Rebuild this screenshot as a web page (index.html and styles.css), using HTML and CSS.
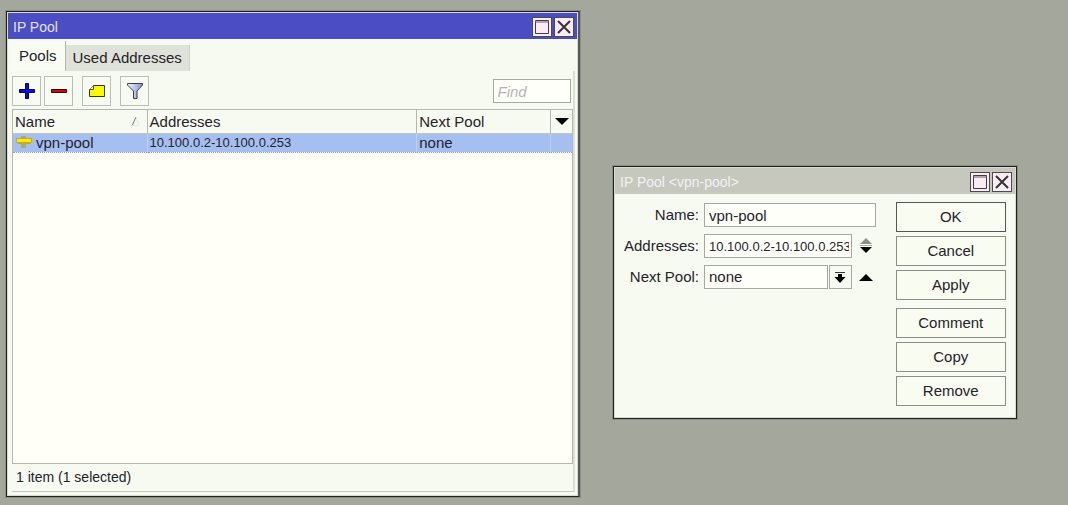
FILE: index.html
```html
<!DOCTYPE html>
<html lang="en">
<head>
<meta charset="utf-8">
<title>IP Pool</title>
<link rel="stylesheet" href="styles.css">
</head>
<body>
<main class="desktop">
  <section class="window window-list" aria-label="IP Pool">
    <header class="titlebar active">
      <h1 class="title">IP Pool</h1>
      <button class="win-btn" aria-label="Maximize"><svg width="18" height="18" viewBox="0 0 18 18"><path d="M2.500 2.500h13v13h-13z" fill="none" stroke="#443a42"/><path d="M2 4h14" stroke="#6b5f68"/></svg></button>
      <button class="win-btn" aria-label="Close"><svg width="18" height="18" viewBox="0 0 18 18"><path d="M3 3l12 12M15 3L3 15" stroke="#3a3038" stroke-width="2"/></svg></button>
    </header>
    <nav class="tabs" role="tablist">
      <button class="tab selected" role="tab" aria-selected="true">Pools</button>
      <button class="tab" role="tab" aria-selected="false">Used Addresses</button>
    </nav>
    <div class="panel">
      <div class="toolbar">
        <button class="tool" aria-label="Add"><svg width="18" height="18" viewBox="0 0 18 18"><path d="M7.500 1.500h3v6h6v3h-6v6h-3v-6h-6v-3h6z" fill="#0a0af0" stroke="#050530"/></svg></button>
        <button class="tool" aria-label="Remove"><svg width="18" height="18" viewBox="0 0 18 18"><path d="M1.500 7.500h15v3h-15z" fill="#d00808" stroke="#300808"/></svg></button>
        <button class="tool spaced" aria-label="Comment"><svg width="18" height="18" viewBox="0 0 18 18"><path d="M5.500 3.500h11v11h-15v-7z" fill="#fafa00" stroke="#38380c"/><path d="M1.500 7.500h4v-4" fill="#fafad0" stroke="#55551c"/></svg></button>
        <button class="tool spaced" aria-label="Filter"><svg width="18" height="18" viewBox="0 0 18 18"><defs><linearGradient id="funnel"><stop offset="0" stop-color="#f4f7ff"/><stop offset="1" stop-color="#7f91d4"/></linearGradient></defs><path d="M1.500 1.500h15v1.500l-5.500 6v7.500h-3.500v-7.500L1.500 3z" fill="url(#funnel)" stroke="#3a3e48"/></svg></button>
        <input class="field find" type="search" placeholder="Find" aria-label="Find">
      </div>
      <div class="list">
        <table class="grid">
          <colgroup><col class="col-name"><col class="col-addr"><col class="col-next"><col></colgroup>
          <thead>
            <tr>
              <th scope="col"><span class="sorted">Name<svg width="8" height="9" viewBox="0 0 8 9"><path d="M1 9L5 0" stroke="#777b72"/><path d="M5 0l3 8.500H1" fill="none" stroke="#e6e8df"/></svg></span></th>
              <th scope="col">Addresses</th>
              <th scope="col">Next Pool</th>
              <th class="menu-cell"><button class="bare" aria-label="Columns"><svg width="14" height="8" viewBox="0 0 14 8"><path d="M0 1h14L7 8z" fill="#000"/></svg></button></th>
            </tr>
          </thead>
          <tbody>
            <tr>
              <td><span class="item"><svg width="18" height="13" viewBox="0 0 18 13"><path d="M6 0h5v2h-5zM6 7h5v5h-5z" fill="#aaa96e"/><path d="M1 2h16v4l-2 2H3L1 6z" fill="#b9ad2a"/><path d="M2 3h14v3H2z" fill="#ffe900"/></svg>vpn-pool</span></td>
              <td class="address">10.100.0.2-10.100.0.253</td>
              <td>none</td>
              <td></td>
            </tr>
          </tbody>
        </table>
      </div>
      <footer class="status">1 item (1 selected)</footer>
    </div>
  </section>

  <section class="window window-detail" aria-label="IP Pool vpn-pool">
    <header class="titlebar">
      <h2 class="title">IP Pool &lt;vpn-pool&gt;</h2>
      <button class="win-btn" aria-label="Maximize"><svg width="18" height="18" viewBox="0 0 18 18"><path d="M2.500 2.500h13v13h-13z" fill="none" stroke="#443a42"/><path d="M2 4h14" stroke="#6b5f68"/></svg></button>
      <button class="win-btn" aria-label="Close"><svg width="18" height="18" viewBox="0 0 18 18"><path d="M3 3l12 12M15 3L3 15" stroke="#3a3038" stroke-width="2"/></svg></button>
    </header>
    <form class="detail">
      <div class="fields">
        <label for="name">Name:</label>
        <div class="control"><input class="field" id="name" value="vpn-pool"></div>
        <label for="addresses">Addresses:</label>
        <div class="control">
          <input class="field address" id="addresses" value="10.100.0.2-10.100.0.253">
          <button class="bare side" type="button" aria-label="Add or remove address"><svg width="14" height="16" viewBox="0 0 14 16"><path d="M1 6h12L7 0z" fill="#8d9187"/><path d="M1 7.500h12" stroke="#aaaea4"/><path d="M1 9h12l-6 6z" fill="#000"/></svg></button>
        </div>
        <label for="next">Next Pool:</label>
        <div class="control">
          <select class="field" id="next"><option>none</option></select>
          <button class="drop" type="button" aria-label="Open list"><svg width="12" height="13" viewBox="0 0 12 13"><path d="M1 1.500h10" stroke="#333"/><path d="M4 3h4v3h3.500L6 12 .5 6H4z" fill="#000"/></svg></button>
          <button class="bare side" type="button" aria-label="Clear next pool"><svg width="14" height="8" viewBox="0 0 14 8"><path d="M0 8h14L7 1z" fill="#000"/></svg></button>
        </div>
      </div>
      <div class="actions">
        <button class="action default" type="button">OK</button>
        <button class="action" type="button">Cancel</button>
        <button class="action" type="button">Apply</button>
        <button class="action group" type="button">Comment</button>
        <button class="action" type="button">Copy</button>
        <button class="action" type="button">Remove</button>
      </div>
    </form>
  </section>
</main>
</body>
</html>
```
FILE: styles.css
```css
* {
  box-sizing: border-box;
}

body {
  margin: 0;
  font-family: "Liberation Sans", Arial, sans-serif;
  font-size: 15px;
  line-height: 18px;
  color: #25232b;
}

button,
input,
select {
  font: inherit;
  color: inherit;
  margin: 0;
  padding: 0;
  border-radius: 0;
}

svg {
  display: block;
  flex: none;
}

.desktop {
  position: relative;
  min-height: 100vh;
  background: #a4a79c;
}

.window {
  position: absolute;
  display: flex;
  flex-direction: column;
  background: #f7faf1;
  border: 1px solid #20221e;
  box-shadow: inset 0 0 0 1px #d8dbd2, 0 0 0 1px #8b8e84;
}

.window-list {
  left: 6px;
  top: 11px;
  bottom: 8px;
  width: 53.7%;
  border-right: 2px solid #575a52;
}

.window-detail {
  left: 57.4%;
  top: 166px;
  width: 37.8%;
}

.titlebar {
  display: flex;
  align-items: center;
  gap: 2px;
  height: 26px;
  margin: 1px 1px 0;
  padding: 2px 3px 0 5px;
  background: #c6c8be;
  color: #f3f0f5;
}

.titlebar.active {
  background: #4a4dc4;
  color: #e4e4fa;
}

.title {
  flex: 1;
  margin: 0;
  font-size: 14px;
  font-weight: normal;
}

.win-btn {
  display: grid;
  place-items: center;
  width: 20px;
  height: 20px;
  background: #f9ecf3;
  border: 1px solid #4c4b4c;
}

.tabs {
  display: flex;
  align-items: flex-end;
  height: 32px;
  padding: 0 4px;
}

.tab {
  height: 26px;
  padding: 0 7px;
  background: #dfe2d8;
  border: 0;
  border-right: 1px solid #cfd2c8;
}

.tab.selected {
  height: 30px;
  padding: 0 8px;
  background: #f9fcf3;
  border-right-color: #b4b7ad;
}

.panel {
  flex: 1;
  display: flex;
  flex-direction: column;
  margin: 0 3px 4px 5px;
  border-right: 2px solid #dcdfd6;
  border-bottom: 1px solid #c5c8be;
}

.toolbar {
  display: flex;
  align-items: center;
  gap: 3px;
  height: 38px;
  padding: 2px 2px 0 0;
}

.tool {
  display: grid;
  place-items: center;
  width: 29px;
  height: 30px;
  background: #f8fbf2;
  border: 1px solid #bbbeb4;
}

.tool.spaced {
  margin-left: 6px;
}

.field {
  flex: 1;
  min-width: 0;
  height: 24px;
  padding: 0 2px 0 4px;
  background: #fffff9;
  border: 1px solid #a6a99f;
  appearance: none;
}

.find {
  flex: none;
  width: 78px;
  margin-left: auto;
  font-style: italic;
}

.find::placeholder {
  color: #b5b4ba;
  opacity: 1;
}

.list {
  flex: 1;
  background: #fffff8;
  border: 1px solid #b4b7ad;
}

.grid {
  width: 100%;
  table-layout: fixed;
  border-collapse: collapse;
}

.col-name {
  width: 24%;
}

.col-addr {
  width: 48.3%;
}

.col-next {
  width: 24%;
}

.grid th {
  height: 23px;
  padding: 1px 2px 0;
  font-weight: normal;
  text-align: left;
  background: #f7faf1;
  border-right: 1px solid #b4b7ad;
  border-bottom: 1px solid #c3c6bc;
}

.grid td {
  height: 19px;
  padding: 0 2px;
  background: #a5bff1;
  border-right: 1px solid #c0d0f2;
  border-bottom: 1px dotted #8c9cbd;
}

.grid th:last-child,
.grid td:last-child {
  border-right: 0;
}

.grid .menu-cell {
  padding: 0 4px;
}

.grid .address,
.address {
  font-size: 13px;
}

.sorted {
  display: flex;
  align-items: center;
  justify-content: space-between;
  padding-right: 6px;
}

.item {
  display: flex;
  align-items: center;
  gap: 3px;
}

.bare {
  display: grid;
  place-items: center;
  background: none;
  border: 0;
}

.status {
  padding: 4px 4px 5px;
  font-size: 14px;
}

.detail {
  display: flex;
  gap: 20px;
  padding: 8px 10px 12px 9px;
}

.fields {
  flex: 1;
  min-width: 0;
  display: grid;
  grid-template-columns: 76px minmax(0, 1fr);
  grid-auto-rows: 24px;
  gap: 7px 5px;
  align-content: start;
  align-items: center;
  padding-top: 1px;
}

.fields label {
  justify-self: end;
  white-space: nowrap;
}

.control {
  display: flex;
}

.side {
  width: 14px;
  margin-left: 7px;
  margin-right: 3px;
}

.drop {
  display: grid;
  place-items: center;
  width: 23px;
  height: 24px;
  margin-left: 1px;
  background: #f7faf1;
  border: 1px solid #a6a99f;
}

.actions {
  flex: 0 0 110px;
  display: flex;
  flex-direction: column;
  gap: 4px;
}

.action {
  height: 30px;
  background: #f8fcf1;
  border: 1px solid #8b8e84;
}

.action.default {
  border-color: #55584f;
}

.action.group {
  margin-top: 4px;
}
```
